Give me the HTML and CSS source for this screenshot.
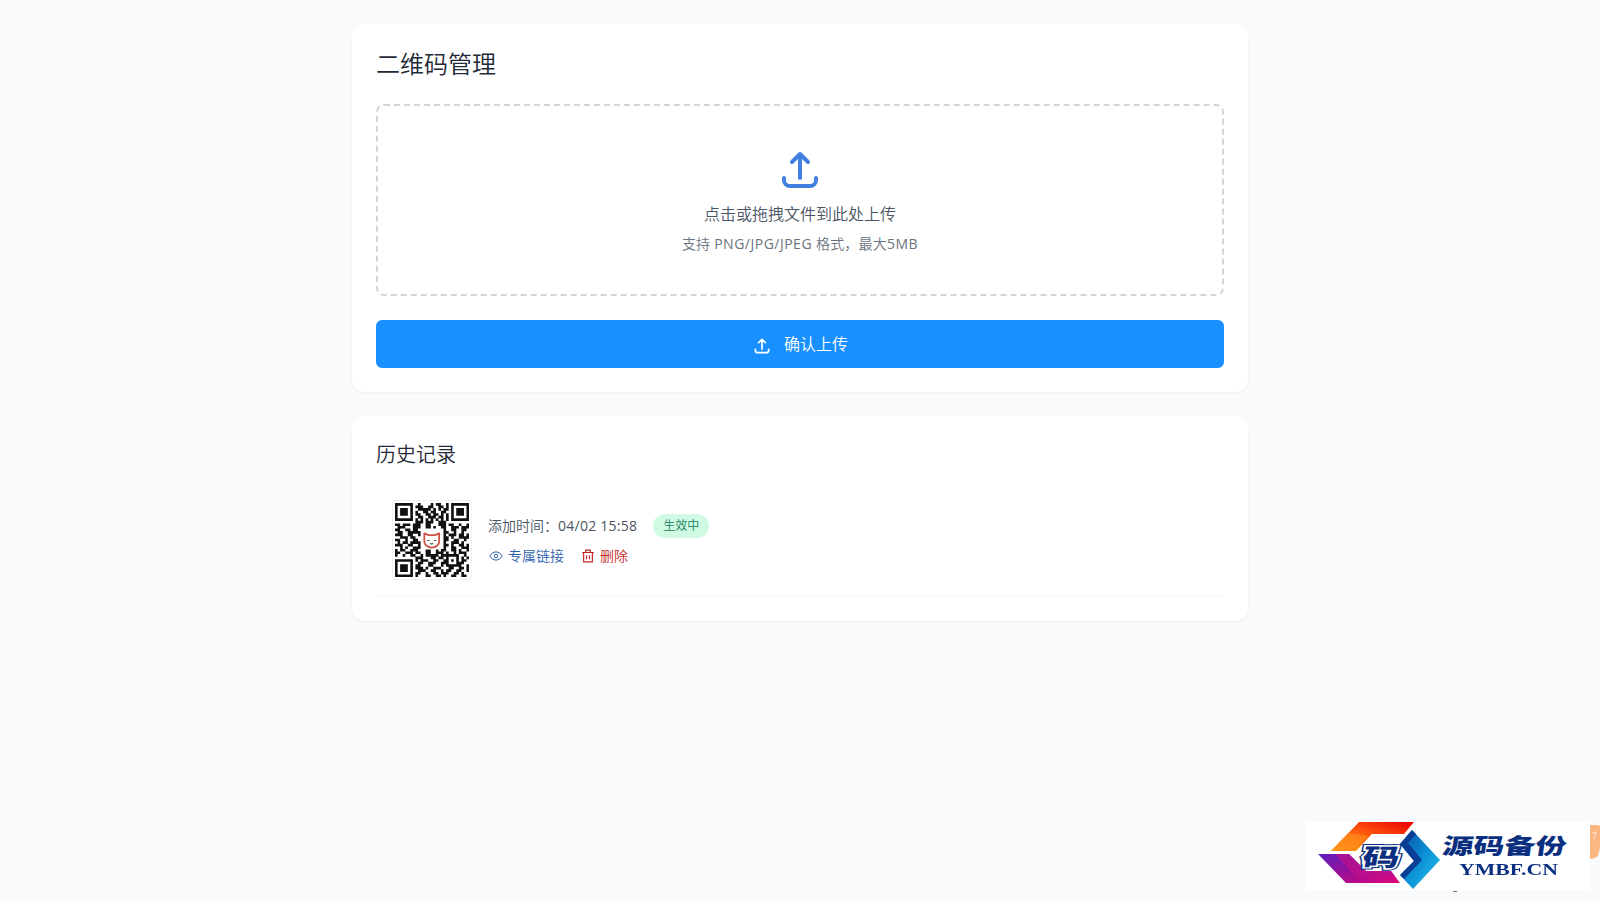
FILE: index.html
```
<!DOCTYPE html>
<html lang="zh-CN">

<head>
  <meta charset="UTF-8" />
  <title>二维码管理</title>
  <link rel="stylesheet" href="styles.css">
</head>

<body>

  <div class="container">
    <!-- Upload -->
    <div class="card">
      <h1 class="page-title">二维码管理</h1>
      <div class="upload-area">
        <svg class="upload-icon" viewBox="0 0 24 24">
          <path d="M4 16v1a3 3 0 003 3h10a3 3 0 003-3v-1m-4-8l-4-4-4 4m4-4v12" />
        </svg>
        <p class="upload-text">点击或拖拽文件到此处上传</p>
        <p class="upload-hint">支持 <span class="latin">PNG/JPG/JPEG</span> 格式，最大<span class="latin">5MB</span></p>
      </div>
      <button class="upload-button">
        <svg class="button-icon" viewBox="0 0 24 24">
          <path d="M4 16v1a3 3 0 003 3h10a3 3 0 003-3v-1m-4-8l-4-4-4 4m4-4v12" />
        </svg>
        <span>确认上传</span>
      </button>
    </div>

    <!-- History -->
    <div class="card">
      <h2 class="section-title">历史记录</h2>
      <div class="history-item">
        <div class="qr-image">
          <svg class="qr-code" viewBox="0 0 29 29">
            <path id="qr-modules" />
            <rect class="qr-logo-bg" x="10.8" y="10.8" width="7.4" height="7.4" rx="1" />
            <path class="qr-logo" d="M11.500 11.900l1.700.7h2.400l1.700-.7v3.200q0 2-2.900 2.400-2.900-.4-2.900-2.400z" />
            <path class="qr-face" d="M12.700 14.700h.8M15.300 14.700h.8M13.800 15.800l.6.3.6-.3" />
          </svg>
        </div>
        <div class="history-info">
          <div class="history-row">
            <span class="history-time">添加时间：<span class="latin">04/02 15:58</span></span>
            <span class="badge">生效中</span>
          </div>
          <div class="history-actions">
            <a class="action link">
              <svg viewBox="0 0 24 24">
                <path d="M1.500 12C4 7.500 7.500 5 12 5s8 2.500 10.500 7C20 16.500 16.500 19 12 19S4 16.500 1.500 12z" />
                <circle cx="12" cy="12" r="3" />
              </svg>
              <span>专属链接</span>
            </a>
            <a class="action delete">
              <svg viewBox="0 0 24 24">
                <path d="M2 6h20M8 6V2h8v4M4.500 6v16h15V6M9.500 10.500v7M14.500 10.500v7" />
              </svg>
              <span>删除</span>
            </a>
          </div>
        </div>
      </div>
    </div>
  </div>

  <!-- Site mark in the corner -->
  <div class="site-mark">
    <svg viewBox="0 0 294 72" width="294" height="72">
      <defs>
        <linearGradient id="g-red" x1="0" y1="1" x2="1" y2="0">
          <stop offset="0" stop-color="#ffb000" />
          <stop offset=".5" stop-color="#ff5a10" />
          <stop offset="1" stop-color="#e80000" />
        </linearGradient>
        <linearGradient id="g-purple" x1="0" y1="0" x2="1" y2="1">
          <stop offset="0" stop-color="#5b1fc0" />
          <stop offset=".5" stop-color="#9c0f96" />
          <stop offset="1" stop-color="#e0067c" />
        </linearGradient>
        <linearGradient id="g-blue" x1="0" y1="0" x2="1" y2="1">
          <stop offset="0" stop-color="#0848a0" />
          <stop offset=".5" stop-color="#0c8fd4" />
          <stop offset="1" stop-color="#25c5ee" />
        </linearGradient>
      </defs>
      <rect class="mark-bg" width="284" height="68" />
      <path fill="url(#g-red)" d="M25 29L53 0h55L98 12H66L50 29z" />
      <path fill="#ff8a20" opacity=".7" d="M25 29L42 11l20 3L46 29z" />
      <path fill="url(#g-purple)" d="M12 32h31l17 17h25l9 12H40z" />
      <path fill="#c0108a" opacity=".7" d="M29 32h14l17 17h25l4 5H50z" />
      <path fill="url(#g-blue)" d="M106 8l28 30-27 29-13-14 14-14-14-17z" />
      <path fill="#0a3d94" d="M106 8l4 4-8 9 14 17-18 19-4-4 14-14-14-17z" />
      <g transform="translate(8) skewX(-10)">
        <text class="mark-symbol outline" x="55" y="44" textLength="37" lengthAdjust="spacingAndGlyphs">码</text>
        <text class="mark-symbol" x="55" y="44" textLength="37" lengthAdjust="spacingAndGlyphs">码</text>
      </g>
      <g transform="translate(5) skewX(-8)">
        <text class="mark-name" x="135" y="32" textLength="124" lengthAdjust="spacingAndGlyphs">源码备份</text>
      </g>
      <text class="mark-domain" x="153" y="53" textLength="99" lengthAdjust="spacingAndGlyphs">YMBF.CN</text>
      <path fill="#fbb781" d="M284 3h8q2 0 2 2v20q-1 10-5 11l-5 1z" />
      <path class="mark-line" d="M286 11l4-1-2 7" />
      <path fill="#777" d="M147 69h4v1h-4z" />
    </svg>
  </div>

  <script src="qr.js"></script>
</body>

</html>
```
FILE: qr.js
```
// one string per row of modules
const rows = [
  '#######..#....#.##..#.#######',
  '#.....#.###..##..##.#.#.....#',
  '#.###.#..#####.#.#.##.#.###.#',
  '#.###.#.#..##.##..##..#.###.#',
  '#.###.#.##..##.##.#.#.#.###.#',
  '#.....#..##..###.##.#.#.....#',
  '#######.#.#.#.#.#.#.#.#######',
  '........###.###..###.........',
  '##.###.###..##...###.##..#..#',
  '.###...###..##.#..##..###.###',
  '##..##.##..........#..##..##.',
  '.##..#####.........##..#..#..',
  '###..##..#.........#.###.##.#',
  '..###.##...........##.#..####',
  '##..#..##..........##..##..#.',
  '.#.##.####.........#..###.#..',
  '###..##..#.........##.#..##.#',
  '..#.#..###.........#..##..###',
  '#.##..###...##..#.##..##.#..#',
  '##..###.##..##..###.#..#.###.',
  '#..#..##..#.#####.#######..#.',
  '........###...##.##.#...#.#.#',
  '#######.#.###..##..##.#.#.##.',
  '#.....#..##..###..###...###..',
  '#.###.#.##...##...#.######..#',
  '#.###.#.###.#..###...##..##.#',
  '#.###.#..###..##..#.##..##..#',
  '#.....#.##..#..##.###..##.#..',
  '#######.#...##..##.#..##..##.'
];

let d = '';
rows.forEach((row, y) => {
  for (let x = 0; x < row.length; x++) {
    if (row[x] === '#') d += `M${x} ${y}h1.03v1.03h-1.03z`;
  }
});
document.getElementById('qr-modules').setAttribute('d', d);
```
FILE: styles.css
```
* {
  box-sizing: border-box;
}

body {
  margin: 0;
  padding: 24px;
  min-height: 100vh;
  background: #f9fafc;
  color: #333;
  font-family: "Open Sans", "Noto Sans CJK SC", sans-serif;
  font-weight: 350;
  overflow: hidden;
}

.container {
  max-width: 896px;
  margin: 0 auto;
  display: flex;
  flex-direction: column;
  gap: 24px;
}

.card {
  padding: 24px;
  background: #fff;
  border-radius: 12px;
  box-shadow: 0 1px 3px rgba(0, 0, 0, 0.05);
}

.page-title {
  margin: 0 0 24px;
  font-size: 24px;
  line-height: 32px;
  font-weight: 350;
  color: #1f2937;
}

.section-title {
  margin: 0;
  padding: 1px 0 15px;
  font-size: 20px;
  line-height: 28px;
  font-weight: 350;
  color: #1f2937;
}

.latin {
  font-weight: 400;
  letter-spacing: 0.25px;
}

.upload-area {
  height: 192px;
  display: flex;
  flex-direction: column;
  align-items: center;
  padding: 40px;
  border: 2px dashed #d3d5d8;
  border-radius: 8px;
}

.upload-icon {
  width: 48px;
  height: 48px;
  margin-bottom: 8px;
  stroke: #4080e0;
}

.upload-icon,
.button-icon {
  fill: none;
  stroke-width: 2;
  stroke-linecap: round;
  stroke-linejoin: round;
}

.upload-text {
  margin: 0 0 8px;
  font-size: 16px;
  line-height: 24px;
  color: #4b5563;
}

.upload-hint {
  margin: 0;
  font-size: 14px;
  line-height: 20px;
  letter-spacing: 0.2px;
  color: #6b7280;
}

.upload-hint .latin {
  letter-spacing: 0.5px;
}

.upload-button {
  width: 100%;
  height: 48px;
  margin-top: 24px;
  padding: 0;
  display: flex;
  align-items: center;
  justify-content: center;
  gap: 12px;
  border: none;
  border-radius: 6px;
  background: #1890ff;
  color: #fff;
  font-family: inherit;
  font-size: 16px;
  font-weight: 350;
  line-height: 24px;
  cursor: pointer;
}

.button-icon {
  width: 20px;
  height: 20px;
  margin-top: 4px;
  stroke: #fff;
}

.history-item {
  display: flex;
  align-items: center;
  gap: 16px;
  padding: 16px;
  border-bottom: 1px solid #f5f6f8;
}

.qr-image {
  width: 80px;
  height: 80px;
  padding: 2px;
  border: 1px solid #f1f1f1;
  border-radius: 4px;
}

.qr-code {
  display: block;
  width: 74px;
  height: 74px;
  fill: #111;
}

.qr-logo-bg {
  fill: #fff;
}

.qr-logo {
  fill: #fff;
  stroke: #cf5345;
  stroke-width: 0.7;
  stroke-linejoin: round;
}

.qr-face {
  fill: none;
  stroke: #444;
  stroke-width: 0.4;
}

.history-info {
  display: flex;
  flex-direction: column;
  gap: 8px;
  font-size: 14px;
  line-height: 20px;
}

.history-row,
.history-actions {
  display: flex;
  align-items: center;
  gap: 16px;
}

.history-time {
  color: #4b5563;
}

.badge {
  padding: 4px 10px;
  border-radius: 12px;
  background: #d1fae5;
  color: #16805a;
  font-size: 12px;
  line-height: 16px;
}

.action {
  display: flex;
  align-items: center;
  gap: 4px;
}

.action svg {
  width: 16px;
  height: 14px;
  fill: none;
  stroke: currentColor;
  stroke-width: 1.7;
}

.link {
  color: #2b5fae;
}

.delete {
  color: #c02626;
}

.action.delete svg {
  stroke-width: 2;
}

.site-mark {
  position: fixed;
  right: 0;
  bottom: 6px;
  height: 72px;
}

.mark-bg {
  fill: #fff;
}

.mark-symbol,
.mark-name {
  font-family: "Noto Sans CJK SC", sans-serif;
  font-weight: 900;
  fill: #0b2f80;
}

.mark-symbol {
  font-size: 24px;
  stroke: #fff;
  stroke-width: 3px;
  paint-order: stroke;
}

.mark-symbol.outline {
  stroke: #0b2f80;
  stroke-width: 5px;
}

.mark-name {
  font-size: 22px;
}

.mark-domain {
  font-family: "Liberation Serif", serif;
  font-size: 16px;
  font-weight: 700;
  fill: #0b2f80;
}

.mark-line {
  fill: none;
  stroke: #fde3cf;
}
```
